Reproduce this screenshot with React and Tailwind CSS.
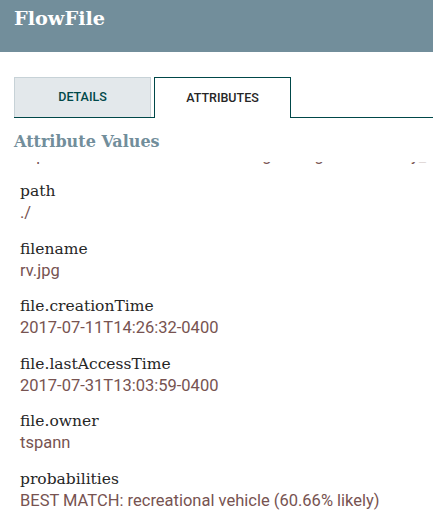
const attributes = [
  { name: 'path', value: './' },
  { name: 'filename', value: 'rv.jpg' },
  { name: 'file.creationTime', value: '2017-07-11T14:26:32-0400' },
  { name: 'file.lastAccessTime', value: '2017-07-31T13:03:59-0400' },
  { name: 'file.owner', value: 'tspann' },
  { name: 'probabilities', value: 'BEST MATCH: recreational vehicle (60.66% likely)' },
]

const slab = "font-['Roboto_Slab','DejaVu_Serif',serif]"

export default function App() {
  return (
    <div className="w-[433px] h-[524px] overflow-hidden bg-white font-['Roboto',sans-serif]">
      {/* header */}
      <div className="h-[52px] bg-[#728e9b] pl-[14px] pt-[6px]">
        <h1 className={`${slab} text-[19.3px] font-bold leading-[26px] text-white`}>FlowFile</h1>
      </div>

      {/* tabs */}
      <div className="mt-[25px] ml-[14px] flex gap-[3px] border-b border-[#004849]">
        <div className="w-[137px] h-[40px] bg-[#e3e8eb] border border-b-0 border-[#c7d2d7] flex items-center justify-center text-[12.5px] font-medium text-[#004849]">
          DETAILS
        </div>
        <div className="w-[137px] h-[41px] -mb-px bg-white border border-b-0 border-[#004849] flex items-center justify-center text-[12.5px] font-medium text-[#262626]">
          ATTRIBUTES
        </div>
      </div>

      <h2 className={`${slab} ml-[14px] mt-[12px] text-[16px] font-bold leading-[24px] text-[#728e9b]`}>
        Attribute Values
      </h2>

      {/* scrolled list */}
      <div className="h-[365px] overflow-hidden pl-[20px] mt-[8px]">
        <div className="-mt-[17.5px]">
          <div className="h-[21px] mb-[15.5px] whitespace-nowrap text-[16.5px] leading-[21px] text-[#775351]">
            /opt/demo/models/tutorials/image/imagenet/classify_image.py, /tmp/imagenet, 2017-07-31
          </div>
          {attributes.map((a) => (
            <div key={a.name} className="mb-[15.5px]">
              <div className={`${slab} text-[15.5px] font-light leading-[21px] text-[#262626]`}>{a.name}</div>
              <div className="text-[16.5px] leading-[21px] text-[#775351]">{a.value}</div>
            </div>
          ))}
        </div>
      </div>
    </div>
  )
}
